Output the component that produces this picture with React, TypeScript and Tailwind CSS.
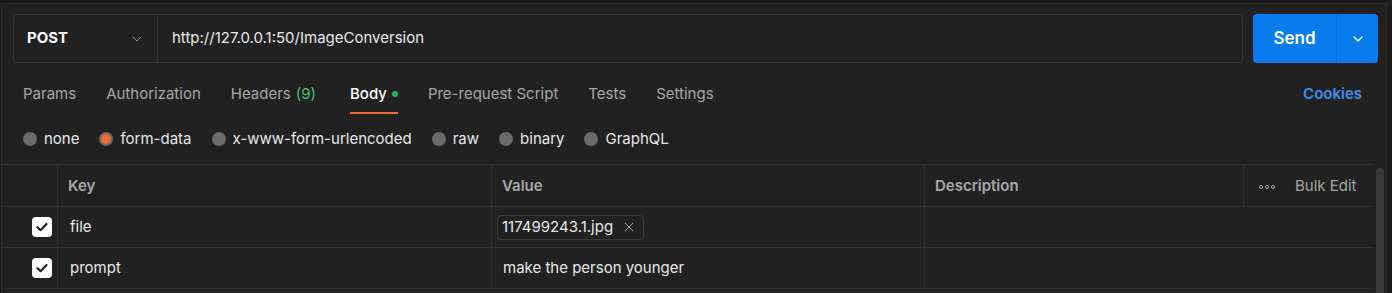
import { ChevronDown, X } from "lucide-react";

const tabs = [
  { label: "Params" },
  { label: "Authorization" },
  { label: "Headers", count: "(9)" },
  { label: "Body", active: true },
  { label: "Pre-request Script" },
  { label: "Tests" },
  { label: "Settings" },
];

const bodyTypes = ["none", "form-data", "x-www-form-urlencoded", "raw", "binary", "GraphQL"];

function Check() {
  return (
    <div className="w-[20px] h-[20px] rounded-[4px] bg-white flex items-center justify-center">
      <svg width="14" height="14" viewBox="0 0 14 14" fill="none">
        <path d="M2.5 7.2 L5.6 10.2 L11.5 4" stroke="#212121" strokeWidth="2.2" strokeLinecap="round" strokeLinejoin="round" />
      </svg>
    </div>
  );
}

export default function App() {
  return (
    <div
      className="w-[1392px] h-[293px] bg-[#1c1c1c] overflow-hidden text-[15px]"
      style={{ fontFamily: "Inter, 'Liberation Sans', sans-serif" }}
    >
      <div className="mt-[3px] ml-[1px] w-[1386px] h-[290px] bg-[#212121] border-t border-l border-r border-[#2c2c2c]">
        {/* url bar */}
        <div className="flex pt-[10px] pl-[11px] gap-[10px]">
          <div className="flex w-[1230px] h-[49px] rounded-[4px] border border-[#343434] bg-[#212121]">
            <div className="w-[144px] flex items-center justify-between pl-[13px] pr-[12px] border-r border-[#343434]">
              <span className="font-bold text-white">POST</span>
              <ChevronDown size={16} strokeWidth={1.5} className="text-[#8a8a8a]" />
            </div>
            <div className="flex items-center pl-[14px] text-[#e8e8e8]">http://127.0.0.1:50/ImageConversion</div>
          </div>
          <div className="flex w-[125px] h-[49px] rounded-[4px] bg-[#097bed] text-white">
            <div className="w-[84px] flex items-center justify-center font-semibold text-[17px] border-r border-[#0a6ad0]">Send</div>
            <div className="flex-1 flex items-center justify-center">
              <ChevronDown size={16} strokeWidth={2} />
            </div>
          </div>
        </div>

        {/* tabs */}
        <div className="flex items-center justify-between pl-[21px] pr-[24px] h-[62px]">
          <div className="flex gap-[30px] h-full">
            {tabs.map((t) => (
              <div key={t.label} className="relative flex items-center h-full">
                <span className={t.active ? "text-white font-medium" : "text-[#a6a6a6]"}>{t.label}</span>
                {t.count && <span className="ml-[5px] mr-[4px] text-[#4cc070]">{t.count}</span>}
                {t.active && <span className="ml-[5px] w-[6px] h-[6px] rounded-full bg-[#1fb35c]" />}
                {t.active && <span className="absolute left-0 right-0 bottom-[11px] h-[2px] bg-[#f26b3a]" />}
              </div>
            ))}
          </div>
          <span className="text-[#3d8ff0] font-semibold">Cookies</span>
        </div>

        {/* body types */}
        <div className="flex items-center gap-[20px] pl-[21px] h-[28px]">
          {bodyTypes.map((b) => (
            <div key={b} className="flex items-center gap-[7px]">
              {b === "form-data" ? (
                <span className="w-[14px] h-[14px] rounded-full bg-[#f26b3a] border-[2px] border-[#6b6b6b]" />
              ) : (
                <span className="w-[14px] h-[14px] rounded-full bg-[#6b6b6b]" />
              )}
              <span className="text-[#e8e8e8]">{b}</span>
            </div>
          ))}
        </div>

        {/* table */}
        <div className="flex mt-[11px]">
          <div className="w-[1371px] border-t border-[#2f2f2f]">
            <div className="grid grid-cols-[56px_434px_433px_319px_129px] h-[42px] border-b border-[#2f2f2f] text-[#a6a6a6]">
              <div className="border-r border-[#2f2f2f]" />
              <div className="border-r border-[#2f2f2f] flex items-center pl-[10px] pt-[2px] font-semibold">Key</div>
              <div className="border-r border-[#2f2f2f] flex items-center pl-[10px] pt-[2px] font-semibold">Value</div>
              <div className="border-r border-[#2f2f2f] flex items-center pl-[10px] pt-[2px] font-semibold">Description</div>
              <div className="flex items-center pl-[15px] pt-[2px] gap-[20px]">
                <span className="flex gap-[2px]">
                  <span className="w-[4px] h-[4px] rounded-full border border-[#a6a6a6]" />
                  <span className="w-[4px] h-[4px] rounded-full border border-[#a6a6a6]" />
                  <span className="w-[4px] h-[4px] rounded-full border border-[#a6a6a6]" />
                </span>
                <span>Bulk Edit</span>
              </div>
            </div>
            <div className="grid grid-cols-[56px_434px_433px_448px] h-[41px] border-b border-[#2f2f2f] text-[#e8e8e8]">
              <div className="border-r border-[#2f2f2f] flex items-center justify-end pr-[5px]">
                <Check />
              </div>
              <div className="border-r border-[#2f2f2f] flex items-center pl-[12px]">file</div>
              <div className="border-r border-[#2f2f2f] flex items-center pl-[5px]">
                <div className="flex items-center h-[25px] pl-[4px] pr-[6px] gap-[8px] rounded-[4px] border border-[#3a3a3a]">
                  <span>117499243.1.jpg</span>
                  <X size={16} strokeWidth={1.5} className="text-[#a6a6a6]" />
                </div>
              </div>
              <div />
            </div>
            <div className="grid grid-cols-[56px_434px_433px_448px] h-[41px] border-b border-[#2f2f2f] text-[#e8e8e8]">
              <div className="border-r border-[#2f2f2f] flex items-center justify-end pr-[5px]">
                <Check />
              </div>
              <div className="border-r border-[#2f2f2f] flex items-center pl-[12px]">prompt</div>
              <div className="border-r border-[#2f2f2f] flex items-center pl-[11px]">make the person younger</div>
              <div />
            </div>
          </div>
          <div className="w-[14px] flex justify-center pt-[4px]">
            <div className="w-[8px] h-[140px] rounded-full bg-[#3a3a3a]" />
          </div>
        </div>
      </div>
    </div>
  );
}
